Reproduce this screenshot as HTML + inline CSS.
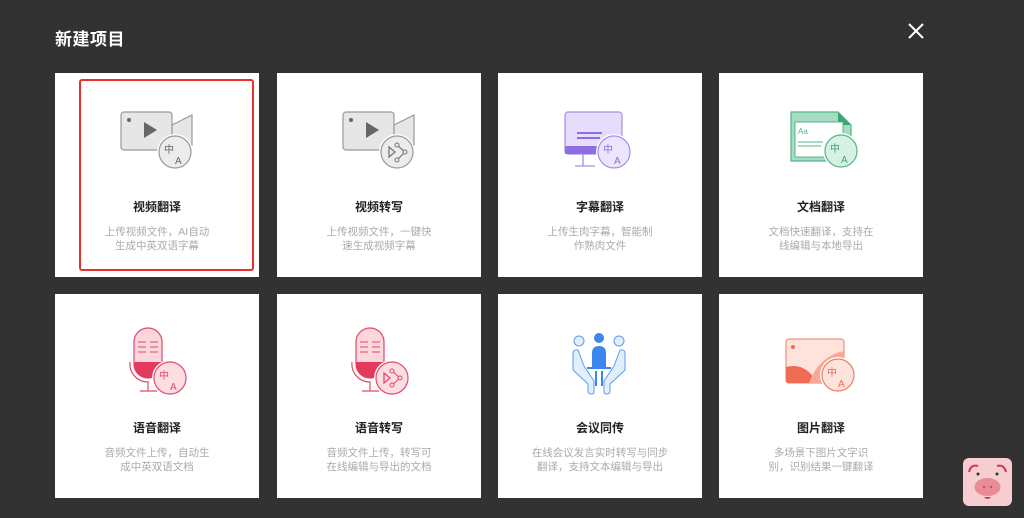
<!DOCTYPE html>
<html><head><meta charset="utf-8">
<style>
*{margin:0;padding:0;box-sizing:border-box}
body{width:1024px;height:518px;background:#323232;position:relative;overflow:hidden;font-family:"Liberation Sans","Noto Sans CJK SC",sans-serif}
.t{position:absolute;left:55px;top:25px;color:#fff;font-size:17px;font-weight:bold;letter-spacing:0.5px}
.x{position:absolute;left:907px;top:22px}
.c{position:absolute;width:204px;height:204px;background:#fff}
.c svg.i{position:absolute;left:52px;top:30px}
.h{position:absolute;left:0;width:100%;top:125px;text-align:center;font-size:12px;font-weight:bold;color:#222}
.d{position:absolute;left:0;width:100%;top:153px;text-align:center;font-size:10.5px;line-height:13.5px;color:#aaa}
.sel{position:absolute;left:79px;top:79px;width:175px;height:192px;border:2px solid #e8312d;border-radius:3px}
.pig{position:absolute;left:963px;top:458px;width:49px;height:48px;background:#f6cdd0;border-radius:6px}
</style></head><body>
<div class="t">新建项目</div>
<svg class="x" width="18" height="18" viewBox="0 0 18 18"><path d="M2 2L16 16M16 2L2 16" stroke="#fff" stroke-width="2"/></svg>

<div class="c" style="left:55px;top:73px">
<svg class="i" width="100" height="80" viewBox="0 0 100 80">
<rect x="14" y="9" width="51" height="38" rx="3" fill="#e6e6e6" stroke="#999" stroke-width="1.2"/>
<path d="M65 22L85 12V42L65 36Z" fill="#e6e6e6" stroke="#999" stroke-width="1.2"/>
<circle cx="22" cy="17" r="2" fill="#666"/>
<path d="M37 19L50 27L37 35Z" fill="#666"/>
<circle cx="68" cy="49" r="18" fill="#fff"/>
<circle cx="68" cy="49" r="16" fill="#ececec" stroke="#999" stroke-width="1.2"/>
<text x="57" y="50" font-size="10" fill="#666">中</text><text x="68" y="61" font-size="10" fill="#666">A</text>
</svg>
<div class="h">视频翻译</div>
<div class="d">上传视频文件，AI自动<br>生成中英双语字幕</div>
</div>
<div class="sel"></div>

<div class="c" style="left:277px;top:73px">
<svg class="i" width="100" height="80" viewBox="0 0 100 80">
<rect x="14" y="9" width="51" height="38" rx="3" fill="#e6e6e6" stroke="#999" stroke-width="1.2"/>
<path d="M65 22L85 12V42L65 36Z" fill="#e6e6e6" stroke="#999" stroke-width="1.2"/>
<circle cx="22" cy="17" r="2" fill="#666"/>
<path d="M37 19L50 27L37 35Z" fill="#666"/>
<circle cx="68" cy="49" r="18" fill="#fff"/>
<circle cx="68" cy="49" r="16" fill="#ececec" stroke="#999" stroke-width="1.2"/>
<path d="M60 44L66 49L60 54Z" fill="none" stroke="#777" stroke-width="1.3"/>
<path d="M68 42L76 49L68 57" fill="none" stroke="#777" stroke-width="1.2"/>
<circle cx="68" cy="42" r="2" fill="#ececec" stroke="#777"/><circle cx="76" cy="49" r="2" fill="#ececec" stroke="#777"/><circle cx="68" cy="57" r="2" fill="#ececec" stroke="#777"/>
</svg>
<div class="h">视频转写</div>
<div class="d">上传视频文件，一键快<br>速生成视频字幕</div>
</div>

<div class="c" style="left:498px;top:73px">
<svg class="i" width="100" height="80" viewBox="0 0 100 80">
<rect x="15" y="9" width="57" height="42" rx="3" fill="#e6dcfb" stroke="#a58de8" stroke-width="1.2"/>
<rect x="15" y="43" width="57" height="8" fill="#8e6ee0"/>
<path d="M27 30H52M27 35H50" stroke="#8e6ee0" stroke-width="2"/>
<path d="M33 51V63M25 63H45" stroke="#a58de8" stroke-width="1.3"/>
<circle cx="64" cy="49" r="18" fill="#fff"/>
<circle cx="64" cy="49" r="16" fill="#ece5fd" stroke="#a58de8" stroke-width="1.2"/>
<text x="53" y="50" font-size="10" fill="#8e6ee0">中</text><text x="64" y="61" font-size="10" fill="#8e6ee0">A</text>
</svg>
<div class="h">字幕翻译</div>
<div class="d">上传生肉字幕，智能制<br>作熟肉文件</div>
</div>

<div class="c" style="left:719px;top:73px">
<svg class="i" width="100" height="80" viewBox="0 0 100 80">
<path d="M20 9H67L80 22V58H20Z" fill="#a6dcc4" stroke="#54b589" stroke-width="1.2"/>
<path d="M67 9V22H80Z" fill="#3aa676"/>
<rect x="24" y="19" width="48" height="35" fill="#fff" stroke="#54b589"/>
<text x="27" y="31" font-size="8" fill="#54b589">Aa</text>
<path d="M27 39H52M27 43H50" stroke="#54b589" stroke-width="1"/>
<circle cx="70" cy="48" r="18" fill="#fff"/>
<circle cx="70" cy="48" r="16" fill="#d6f2e4" stroke="#54b589" stroke-width="1.2"/>
<text x="59" y="49" font-size="10" fill="#3aa676">中</text><text x="70" y="60" font-size="10" fill="#3aa676">A</text>
</svg>
<div class="h">文档翻译</div>
<div class="d">文档快速翻译，支持在<br>线编辑与本地导出</div>
</div>

<div class="c" style="left:55px;top:294px">
<svg class="i" width="100" height="80" viewBox="0 0 100 80">
<rect x="27" y="4" width="28" height="50" rx="14" fill="#fbd6dc" stroke="#e04b6a" stroke-width="1.2"/>
<path d="M27 38H55V40A14 14 0 0 1 27 40Z" fill="#e43a5c"/>
<path d="M31 18H39M43 18H51M31 23H39M43 23H51M31 28H39M43 28H51" stroke="#e04b6a" stroke-width="1"/>
<path d="M23 38A18 18 0 0 0 41 58V67M33 67H50" fill="none" stroke="#e04b6a" stroke-width="1.2"/>
<circle cx="63" cy="54" r="18" fill="#fff"/>
<circle cx="63" cy="54" r="16" fill="#fbdde2" stroke="#e04b6a" stroke-width="1.2"/>
<text x="52" y="55" font-size="10" fill="#e04b6a">中</text><text x="63" y="66" font-size="10" fill="#e04b6a">A</text>
</svg>
<div class="h">语音翻译</div>
<div class="d">音频文件上传，自动生<br>成中英双语文档</div>
</div>

<div class="c" style="left:277px;top:294px">
<svg class="i" width="100" height="80" viewBox="0 0 100 80">
<rect x="27" y="4" width="28" height="50" rx="14" fill="#fbd6dc" stroke="#e04b6a" stroke-width="1.2"/>
<path d="M27 38H55V40A14 14 0 0 1 27 40Z" fill="#e43a5c"/>
<path d="M31 18H39M43 18H51M31 23H39M43 23H51M31 28H39M43 28H51" stroke="#e04b6a" stroke-width="1"/>
<path d="M23 38A18 18 0 0 0 41 58V67M33 67H50" fill="none" stroke="#e04b6a" stroke-width="1.2"/>
<circle cx="63" cy="54" r="18" fill="#fff"/>
<circle cx="63" cy="54" r="16" fill="#fbdde2" stroke="#e04b6a" stroke-width="1.2"/>
<path d="M55 49L61 54L55 59Z" fill="none" stroke="#e04b6a" stroke-width="1.3"/>
<path d="M63 47L71 54L63 61" fill="none" stroke="#e04b6a"/>
<circle cx="63" cy="47" r="2" fill="#fbdde2" stroke="#e04b6a"/><circle cx="71" cy="54" r="2" fill="#fbdde2" stroke="#e04b6a"/><circle cx="63" cy="61" r="2" fill="#fbdde2" stroke="#e04b6a"/>
</svg>
<div class="h">语音转写</div>
<div class="d">音频文件上传，转写可<br>在线编辑与导出的文档</div>
</div>

<div class="c" style="left:498px;top:294px">
<svg class="i" width="100" height="80" viewBox="0 0 100 80">
<circle cx="29" cy="17" r="5" fill="#e3eefc" stroke="#5b9cf0"/>
<circle cx="69" cy="17" r="5" fill="#e3eefc" stroke="#5b9cf0"/>
<circle cx="49" cy="14" r="5" fill="#3c87ee"/>
<path d="M23 30Q23 25 28 26L34 42L44 57V68Q44 70 41 70Q38 70 38 67V60L23 46Z" fill="#e3eefc" stroke="#5b9cf0"/>
<path d="M75 30Q75 25 70 26L64 42L54 57V68Q54 70 57 70Q60 70 60 67V60L75 46Z" fill="#e3eefc" stroke="#5b9cf0"/>
<path d="M42 43V29Q42 22 49 22Q56 22 56 29V43Z" fill="#3c87ee"/>
<path d="M37 44H61" stroke="#3c87ee" stroke-width="2"/>
<path d="M46 47V62M52 47V62" stroke="#3c87ee" stroke-width="2"/>
</svg>
<div class="h">会议同传</div>
<div class="d">在线会议发言实时转写与同步<br>翻译，支持文本编辑与导出</div>
</div>

<div class="c" style="left:719px;top:294px">
<svg class="i" width="100" height="80" viewBox="0 0 100 80">
<rect x="15" y="15" width="58" height="44" rx="3" fill="#fde3dc" stroke="#f07a64"/>
<circle cx="22" cy="23" r="2" fill="#f06b54"/>
<path d="M15 43Q35 38 46 59H17Q15 59 15 56Z" fill="#f06b54"/>
<path d="M38 59Q48 32 73 27V59Z" fill="#f7a896"/>
<circle cx="67" cy="51" r="18" fill="#fff"/>
<circle cx="67" cy="51" r="16" fill="#fde3dc" stroke="#f07a64" stroke-width="1.2"/>
<text x="56" y="52" font-size="10" fill="#f06b54">中</text><text x="67" y="63" font-size="10" fill="#f06b54">A</text>
</svg>
<div class="h">图片翻译</div>
<div class="d">多场景下图片文字识<br>别，识别结果一键翻译</div>
</div>

<div class="pig">
<svg width="49" height="48" viewBox="0 0 49 48">
<path d="M6 14Q8 6 15 8M43 14Q41 6 34 8" fill="none" stroke="#d9344a" stroke-width="2"/>
<circle cx="15" cy="16" r="1.5" fill="#333"/><circle cx="34" cy="16" r="1.5" fill="#333"/>
<ellipse cx="24.5" cy="29" rx="13" ry="9" fill="#ea8c98"/>
<circle cx="21" cy="29" r="1.2" fill="#c9506a"/><circle cx="28" cy="29" r="1.2" fill="#c9506a"/>
<path d="M21 39Q24.5 43 28 39" fill="#d9344a"/>
</svg>
</div>
</body></html>
